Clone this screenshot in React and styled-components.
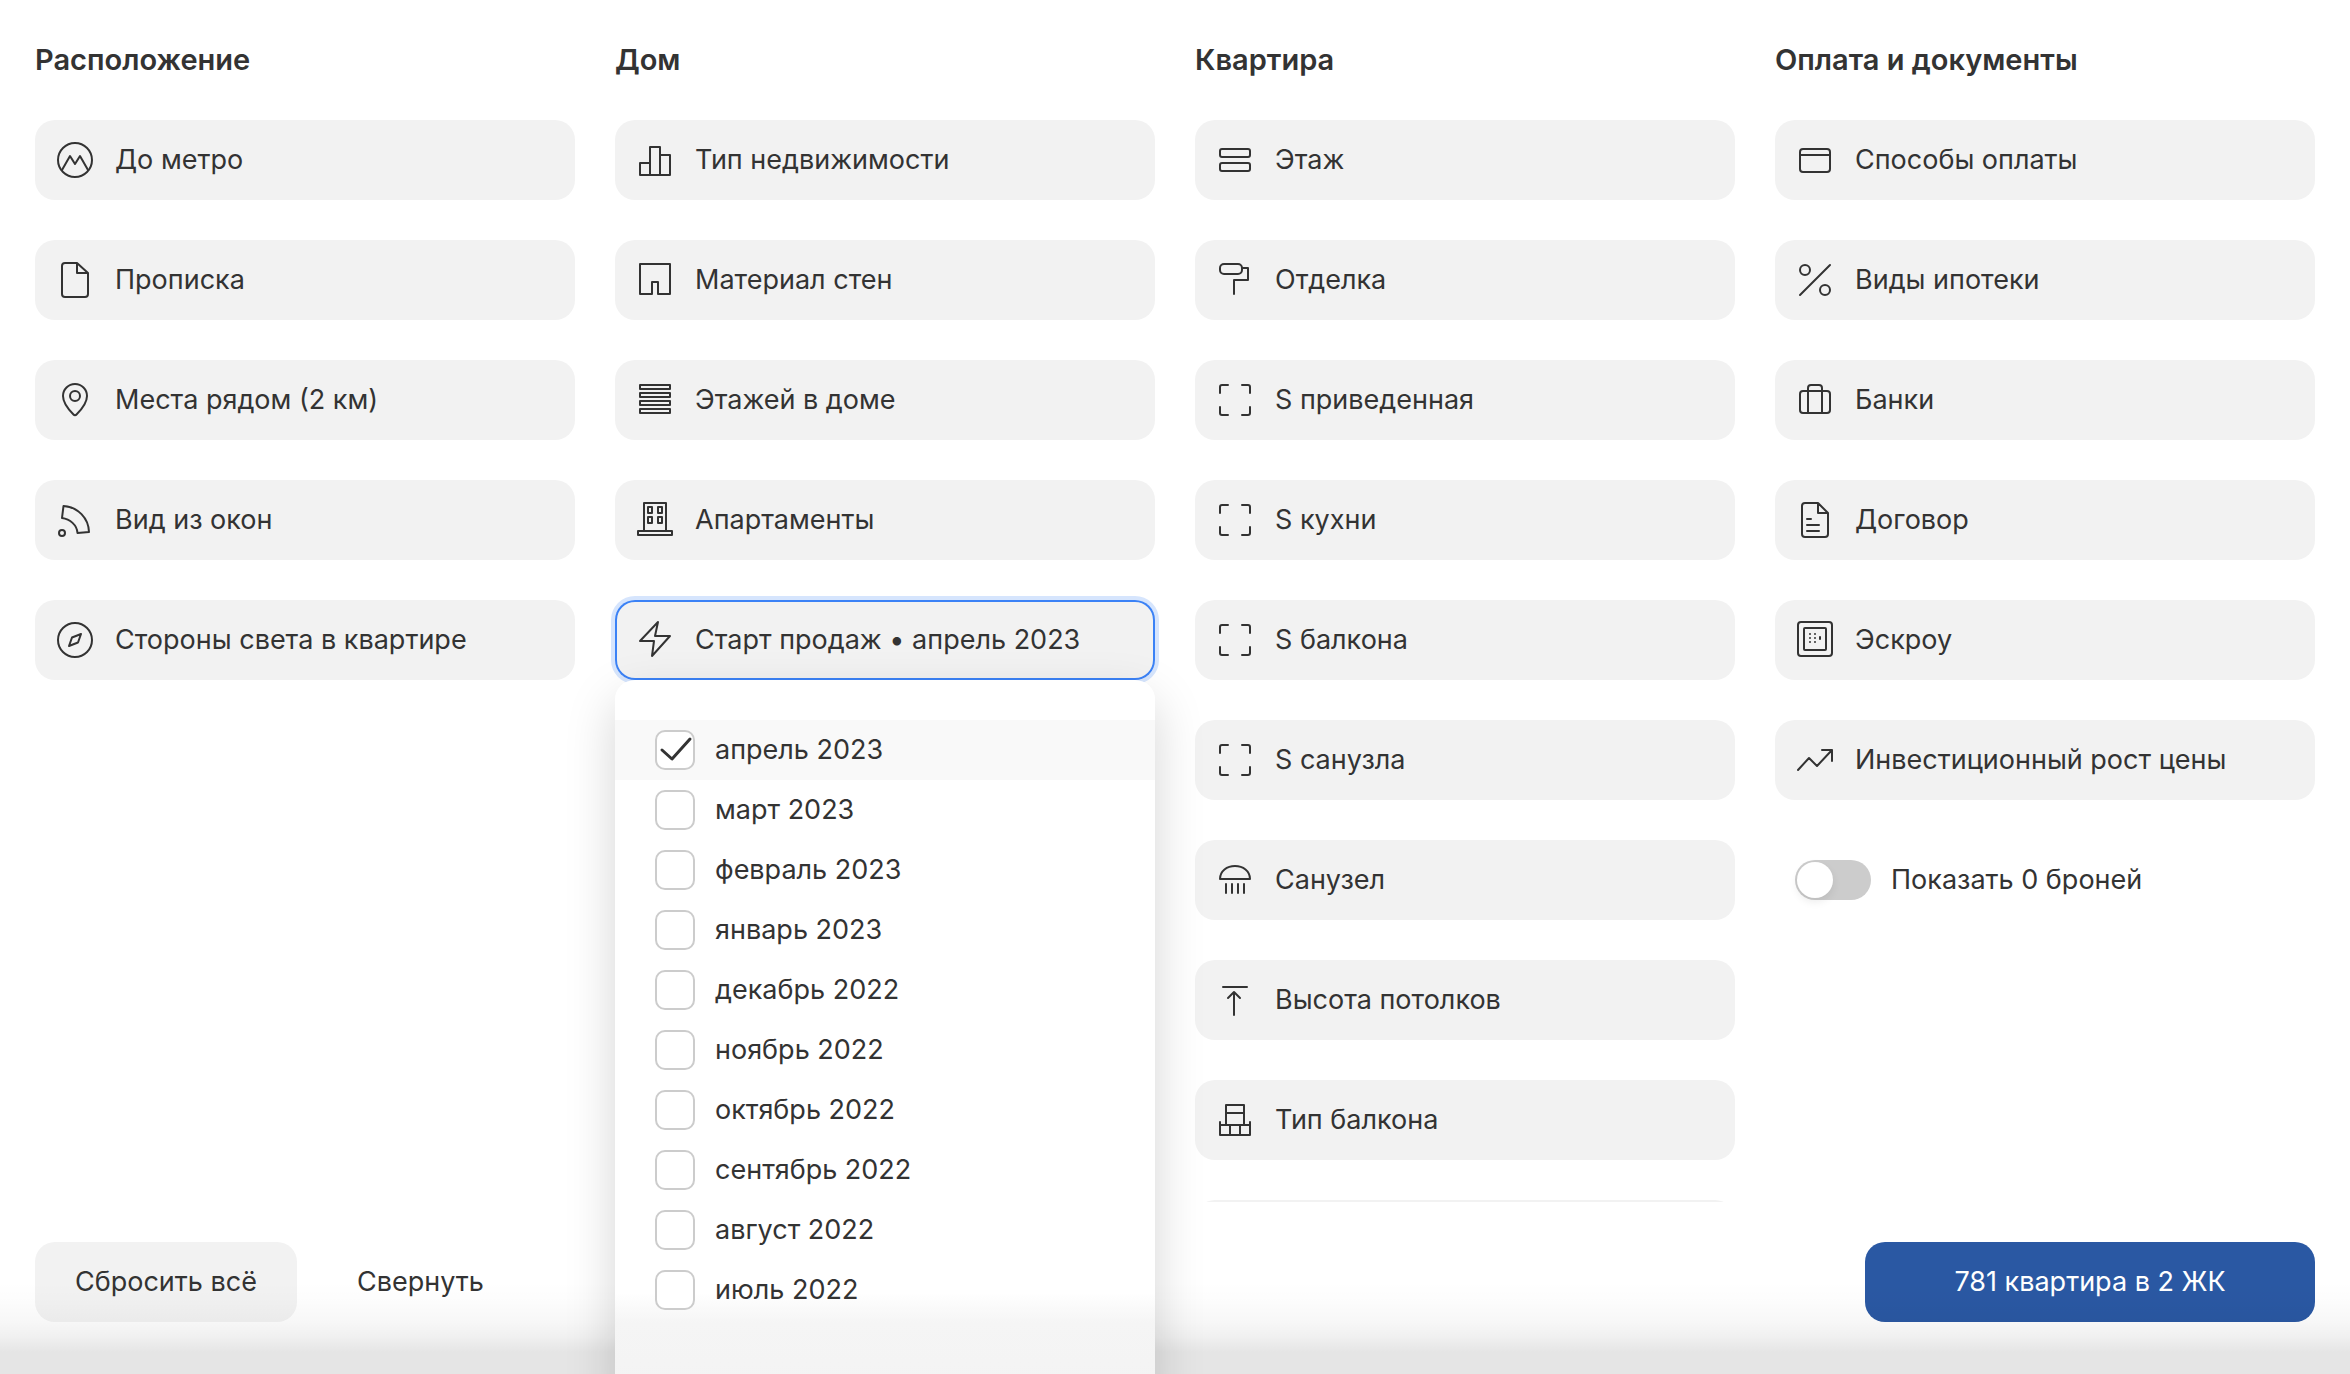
import React, { useState } from 'react';
import styled, { createGlobalStyle, css } from 'styled-components';

const GlobalStyle = createGlobalStyle`
  *,
  *::before,
  *::after {
    box-sizing: border-box;
  }

  body {
    margin: 0;
    background: #fff;
    color: #333;
    font-family: Inter, 'Liberation Sans', sans-serif;
    font-size: 27px;
    line-height: 40px;
    -webkit-font-smoothing: antialiased;
  }

  button,
  input {
    font: inherit;
    color: inherit;
  }
`;

const Page = styled.div`
  height: 100vh;
  display: flex;
  flex-direction: column;
  overflow: hidden;
`;

const Columns = styled.main`
  flex: 1;
  min-height: 0;
  display: grid;
  grid-template-columns: repeat(4, minmax(0, 1fr));
  grid-template-rows: minmax(0, 1fr);
  gap: 40px;
  padding: 40px 35px 0;
`;

const Column = styled.section`
  display: flex;
  flex-direction: column;
  gap: 40px;
  min-height: 0;
  ${({ $clipped }) => $clipped && 'overflow: hidden;'}
`;

const Title = styled.h2`
  margin: 0;
  font-size: 29px;
  line-height: 40px;
  font-weight: 600;
`;

const Slot = styled.div`
  position: relative;
  flex-shrink: 0;
`;

const FilterButton = styled.button`
  width: 100%;
  height: 80px;
  display: flex;
  align-items: center;
  gap: 20px;
  padding: 0 20px;
  border: none;
  border-radius: 20px;
  background: #f2f2f2;
  text-align: left;
  white-space: nowrap;
  cursor: pointer;

  ${({ $active }) =>
    $active &&
    css`
      box-shadow:
        inset 0 0 0 2px #3b82f6,
        0 0 0 4px #d6e5fd;
    `}
`;

const Icon = styled.svg`
  width: 40px;
  height: 40px;
  flex-shrink: 0;
  fill: none;
  stroke: currentColor;
  stroke-width: 2;
  stroke-linecap: round;
  stroke-linejoin: round;
`;

const NextCard = styled.div`
  flex-shrink: 0;
  height: 80px;
  border-radius: 20px;
  background: #f2f2f2;
`;

const Popover = styled.div`
  position: absolute;
  z-index: 2;
  top: 100%;
  left: 0;
  right: 0;
  padding: 40px 0 80px;
  border-radius: 20px 20px 0 0;
  background: linear-gradient(to top, #f3f3f3, #f5f5f5 77px, #fff 107px);
  box-shadow: 0 20px 50px rgba(0, 0, 0, 0.17);
`;

const Option = styled.label`
  height: 60px;
  display: flex;
  align-items: center;
  gap: 20px;
  padding: 0 40px;
  background: ${({ $checked }) => ($checked ? '#f9f9f9' : 'transparent')};
  cursor: pointer;
`;

const Box = styled.span`
  display: grid;
  width: 40px;
  height: 40px;
  flex-shrink: 0;

  input,
  svg {
    grid-area: 1 / 1;
  }

  svg {
    stroke-width: 3;
    pointer-events: none;
  }
`;

const Checkbox = styled.input`
  appearance: none;
  width: 40px;
  height: 40px;
  margin: 0;
  border: 2px solid #ccc;
  border-radius: 10px;
  background: #fff;
`;

const SwitchRow = styled.label`
  height: 80px;
  display: flex;
  align-items: center;
  gap: 20px;
  padding: 0 20px;
  cursor: pointer;
`;

const Switch = styled.input`
  appearance: none;
  display: flex;
  align-items: center;
  width: 76px;
  height: 40px;
  margin: 0;
  padding: 2px;
  border-radius: 20px;
  background: #ccc;

  &::before {
    content: '';
    width: 36px;
    height: 36px;
    border-radius: 50%;
    background: #fff;
    box-shadow: 0 4px 8px rgba(0, 0, 0, 0.08);
  }

  &:checked {
    justify-content: flex-end;
    background: #2a58a3;
  }
`;

const Footer = styled.footer`
  position: relative;
  z-index: 1;
  display: flex;
  gap: 20px;
  padding: 40px 35px 52px;

  &::after {
    content: '';
    position: absolute;
    inset: auto 0 0;
    height: 92px;
    background: linear-gradient(
      to top,
      rgba(0, 0, 0, 0.1) 22px,
      rgba(0, 0, 0, 0.06) 37px,
      rgba(0, 0, 0, 0.03) 52px,
      rgba(0, 0, 0, 0.01) 72px,
      transparent
    );
    pointer-events: none;
  }
`;

const Action = styled.button`
  height: 80px;
  padding: 0 40px;
  border: none;
  border-radius: 20px;
  background: ${({ $filled }) => ($filled ? '#f2f2f2' : 'transparent')};
  cursor: pointer;
`;

const Submit = styled(Action)`
  min-width: 450px;
  margin-left: auto;
  background: #2a58a3;
  color: #fff;
`;

const icons = {
  metro: (
    <>
      <circle cx="20" cy="20" r="17" />
      <path d="M7 30l8-14 5 8 5-8 8 14" />
    </>
  ),
  file: (
    <path d="M22 3H10a3 3 0 0 0-3 3v28a3 3 0 0 0 3 3h20a3 3 0 0 0 3-3V13L22 3v10h11" />
  ),
  pin: (
    <>
      <path d="M32 16c0 8-7 15-10.5 18.5a2 2 0 0 1-3 0C15 31 8 24 8 16a12 12 0 0 1 24 0z" />
      <circle cx="20" cy="16" r="5" />
    </>
  ),
  view: (
    <>
      <circle cx="7" cy="33" r="3" />
      <path d="M8.5 6C23 7 33.5 18 34 32l-11.500 1C22 25 15 19 7 18z" />
    </>
  ),
  compass: (
    <>
      <circle cx="20" cy="20" r="17" />
      <path d="M26 14l-9 3.500-3 8.500 9-3.500z" />
    </>
  ),
  bars: <path d="M15 23H5v12h30V15H25M15 35V7h10v28" />,
  walls: <path d="M17 34H5V4h30v30H23V22h-6v12" />,
  floors: <path d="M5 5h30v4H5zM5 13h30v4H5zM5 21h30v4H5zM5 29h30v4H5z" />,
  building: (
    <path d="M9 31V3h22v28M3 31h34v4H3zM13 7h4v6h-4zM23 7h4v6h-4zM13 17h4v6h-4zM23 17h4v6h-4z" />
  ),
  bolt: <path d="M23 2L5 21h14l-2 15 18-20H20z" />,
  level: (
    <>
      <rect x="5" y="9" width="30" height="8" rx="2" />
      <rect x="5" y="23" width="30" height="8" rx="2" />
    </>
  ),
  roller: (
    <>
      <rect x="5" y="4" width="22" height="10" rx="4" />
      <path d="M27 8h6v12H19v14" />
    </>
  ),
  area: (
    <path d="M5 13V7a2 2 0 0 1 2-2h6M27 5h6a2 2 0 0 1 2 2v6M35 27v6a2 2 0 0 1-2 2h-6M13 35H7a2 2 0 0 1-2-2v-6" />
  ),
  shower: (
    <path d="M5 19C5 11 12 6 20 6s15 5 15 13zM11 24v9M17 24v9M23 24v9M29 24v9" />
  ),
  height: <path d="M8 7h24M19 35V12M13 18l6-6 6 6" />,
  balcony: <path d="M11 25V5h18v20M11 13h18M5 22v13h30V22M5 25h30M15 25v10M25 25v10" />,
  card: (
    <>
      <rect x="5" y="9" width="30" height="23" rx="3" />
      <path d="M5 15h30" />
    </>
  ),
  percent: (
    <>
      <circle cx="10" cy="10" r="5" />
      <circle cx="30" cy="30" r="5" />
      <path d="M5 35L35 5" />
    </>
  ),
  suitcase: (
    <>
      <rect x="5" y="11" width="30" height="22" rx="3" />
      <path d="M13 33V8a3 3 0 0 1 3-3h8a3 3 0 0 1 3 3v25" />
    </>
  ),
  contract: (
    <path d="M23 3H10a3 3 0 0 0-3 3v28a3 3 0 0 0 3 3h20a3 3 0 0 0 3-3V13L23 3v10h10M12 19h4M12 25h12M12 31h12" />
  ),
  safe: (
    <>
      <rect x="3" y="2" width="34" height="34" rx="3" />
      <rect x="9" y="8" width="22" height="22" rx="1" />
      <path d="M15 14h0M20 14h0M15 18h0M20 18h0M15 22h0M20 22h0M25 17v2" />
    </>
  ),
  growth: <path d="M3 30l11-12 8 8 15-16M27 10h10v11" />,
  check: <path d="M7 20l10 9L35 9" />,
};

const columns = [
  {
    title: 'Расположение',
    filters: [
      ['metro', 'До метро'],
      ['file', 'Прописка'],
      ['pin', 'Места рядом (2 км)'],
      ['view', 'Вид из окон'],
      ['compass', 'Стороны света в квартире'],
    ],
  },
  {
    title: 'Дом',
    filters: [
      ['bars', 'Тип недвижимости'],
      ['walls', 'Материал стен'],
      ['floors', 'Этажей в доме'],
      ['building', 'Апартаменты'],
      ['bolt', 'Старт продаж'],
    ],
  },
  {
    title: 'Квартира',
    hasMore: true,
    filters: [
      ['level', 'Этаж'],
      ['roller', 'Отделка'],
      ['area', 'S приведенная'],
      ['area', 'S кухни'],
      ['area', 'S балкона'],
      ['area', 'S санузла'],
      ['shower', 'Санузел'],
      ['height', 'Высота потолков'],
      ['balcony', 'Тип балкона'],
    ],
  },
  {
    title: 'Оплата и документы',
    hasSwitch: true,
    filters: [
      ['card', 'Способы оплаты'],
      ['percent', 'Виды ипотеки'],
      ['suitcase', 'Банки'],
      ['contract', 'Договор'],
      ['safe', 'Эскроу'],
      ['growth', 'Инвестиционный рост цены'],
    ],
  },
];

const months = [
  'апрель 2023',
  'март 2023',
  'февраль 2023',
  'январь 2023',
  'декабрь 2022',
  'ноябрь 2022',
  'октябрь 2022',
  'сентябрь 2022',
  'август 2022',
  'июль 2022',
];

const Glyph = ({ name }) => (
  <Icon viewBox="0 0 40 40" aria-hidden="true">
    {icons[name]}
  </Icon>
);

const SalesStart = ({ icon, label }) => {
  const [open, setOpen] = useState(true);
  const [selected, setSelected] = useState(['апрель 2023']);

  const toggle = (month) =>
    setSelected((prev) =>
      prev.includes(month) ? prev.filter((m) => m !== month) : [...prev, month]
    );

  return (
    <Slot>
      <FilterButton
        type="button"
        $active={open}
        aria-expanded={open}
        onClick={() => setOpen(!open)}
      >
        <Glyph name={icon} />
        {[label, ...selected].join(' • ')}
      </FilterButton>
      {open && (
        <Popover>
          {months.map((month) => (
            <Option key={month} $checked={selected.includes(month)}>
              <Box>
                <Checkbox
                  type="checkbox"
                  checked={selected.includes(month)}
                  onChange={() => toggle(month)}
                />
                {selected.includes(month) && <Glyph name="check" />}
              </Box>
              {month}
            </Option>
          ))}
        </Popover>
      )}
    </Slot>
  );
};

const App = () => (
  <>
    <GlobalStyle />
    <Page>
      <Columns>
        {columns.map(({ title, filters, hasMore, hasSwitch }) => (
          <Column key={title} $clipped={hasMore}>
            <Title>{title}</Title>
            {filters.map(([icon, label]) =>
              icon === 'bolt' ? (
                <SalesStart key={label} icon={icon} label={label} />
              ) : (
                <Slot key={label}>
                  <FilterButton type="button">
                    <Glyph name={icon} />
                    {label}
                  </FilterButton>
                </Slot>
              )
            )}
            {hasMore && <NextCard />}
            {hasSwitch && (
              <SwitchRow>
                <Switch type="checkbox" role="switch" />
                Показать 0 броней
              </SwitchRow>
            )}
          </Column>
        ))}
      </Columns>
      <Footer>
        <Action type="button" $filled>
          Сбросить всё
        </Action>
        <Action type="button">Свернуть</Action>
        <Submit type="button">781 квартира в 2 ЖК</Submit>
      </Footer>
    </Page>
  </>
);

export default App;
